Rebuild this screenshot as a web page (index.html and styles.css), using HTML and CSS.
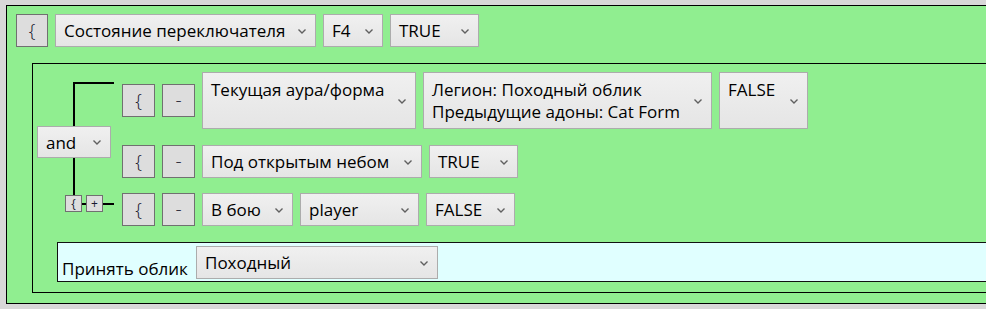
FILE: index.html
```html
<!DOCTYPE html>
<html>
<head>
	<title>Condition editor</title>
	<link rel="stylesheet" href="styles.css">
</head>
<body>
	<div class="outer">
		<div class="head">
			<button class="btn">{</button>
			<div class="combo w-state"><span class="txt">Состояние переключателя</span><svg class="arrow" viewBox="0 0 8 5"><path d="M0.5 0.5 L4 4 L7.5 0.5"/></svg></div>
			<div class="combo w-key"><span class="txt">F4</span><svg class="arrow" viewBox="0 0 8 5"><path d="M0.5 0.5 L4 4 L7.5 0.5"/></svg></div>
			<div class="combo w-bool"><span class="txt">TRUE</span><svg class="arrow" viewBox="0 0 8 5"><path d="M0.5 0.5 L4 4 L7.5 0.5"/></svg></div>
		</div>

		<div class="inner">
			<div class="cond">
				<div class="tree">
					<div class="tree-top"></div>
					<div class="combo w-and"><span class="txt">and</span><svg class="arrow" viewBox="0 0 8 5"><path d="M0.5 0.5 L4 4 L7.5 0.5"/></svg></div>
					<div class="tree-mid"></div>
					<div class="tree-tools">
						<button class="mini">{</button>
						<span class="link link-short"></span>
						<button class="mini">+</button>
						<span class="link link-long"></span>
					</div>
				</div>

				<div class="rows">
					<div class="row row-tall">
						<button class="btn">{</button>
						<button class="btn">-</button>
						<div class="combo w-aura"><span class="txt">Текущая аура/форма</span><svg class="arrow" viewBox="0 0 8 5"><path d="M0.5 0.5 L4 4 L7.5 0.5"/></svg></div>
						<div class="combo w-legion"><span class="txt">Легион: Походный облик<br>Предыдущие адоны: Cat Form</span><svg class="arrow" viewBox="0 0 8 5"><path d="M0.5 0.5 L4 4 L7.5 0.5"/></svg></div>
						<div class="combo w-bool"><span class="txt">FALSE</span><svg class="arrow" viewBox="0 0 8 5"><path d="M0.5 0.5 L4 4 L7.5 0.5"/></svg></div>
					</div>
					<div class="row">
						<button class="btn">{</button>
						<button class="btn">-</button>
						<div class="combo w-sky"><span class="txt">Под открытым небом</span><svg class="arrow" viewBox="0 0 8 5"><path d="M0.5 0.5 L4 4 L7.5 0.5"/></svg></div>
						<div class="combo w-bool"><span class="txt">TRUE</span><svg class="arrow" viewBox="0 0 8 5"><path d="M0.5 0.5 L4 4 L7.5 0.5"/></svg></div>
					</div>
					<div class="row">
						<button class="btn">{</button>
						<button class="btn">-</button>
						<div class="combo w-fight"><span class="txt">В бою</span><svg class="arrow" viewBox="0 0 8 5"><path d="M0.5 0.5 L4 4 L7.5 0.5"/></svg></div>
						<div class="combo w-unit"><span class="txt">player</span><svg class="arrow" viewBox="0 0 8 5"><path d="M0.5 0.5 L4 4 L7.5 0.5"/></svg></div>
						<div class="combo w-bool"><span class="txt">FALSE</span><svg class="arrow" viewBox="0 0 8 5"><path d="M0.5 0.5 L4 4 L7.5 0.5"/></svg></div>
					</div>
				</div>
			</div>

			<div class="action">
				<span class="label">Принять облик</span>
				<div class="combo w-form"><span class="txt">Походный</span><svg class="arrow" viewBox="0 0 8 5"><path d="M0.5 0.5 L4 4 L7.5 0.5"/></svg></div>
			</div>
		</div>
	</div>
</body>
</html>
```

FILE: styles.css
```css
body {
	margin: 0;
	background: #d8d8d8;
	overflow: hidden;
	font-family: "Open Sans", "Noto Sans", sans-serif;
	font-size: 17px;
	color: #000;
}

.outer {
	margin: 5px 0 0 6px;
	border: 1px solid #000;
	border-right: 0;
	background: #90ee90;
	padding: 8px 0 10px 9px;
}

.head {
	display: flex;
	gap: 7px;
}

.btn {
	width: 33px;
	height: 33px;
	flex: none;
	padding: 0;
	border: 1px solid #707070;
	background: #dddddd;
	font-family: inherit;
	font-size: 19px;
	font-weight: 300;
	color: #1a1a30;
	line-height: 1;
}

.head .btn {
	width: 32px;
}

.combo {
	display: flex;
	align-items: flex-start;
	box-sizing: border-box;
	height: 33px;
	flex: none;
	padding: 5px 9px 0 8px;
	border: 1px solid #acacac;
	background: linear-gradient(#f0f0f0, #e5e5e5);
	line-height: 22px;
	white-space: nowrap;
}

.combo .txt {
	flex: 1;
}

.arrow {
	align-self: center;
	width: 8px;
	height: 5px;
	margin-top: -4px;
}

.arrow path {
	fill: none;
	stroke: #606060;
	stroke-width: 1.4;
}

.w-state { width: 261px; }
.w-key { width: 60px; }
.w-bool { width: 89px; }
.w-and { width: 74px; height: 32px; }
.w-aura { width: 214px; }
.w-legion { width: 289px; }
.w-sky { width: 220px; }
.w-fight { width: 91px; }
.w-unit { width: 119px; }
.w-form { width: 242px; }

.inner {
	margin: 16px 0 0 16px;
	border: 1px solid #000;
	border-right: 0;
	padding: 8px 0 10px 0;
}

.cond {
	display: flex;
	padding-left: 4px;
}

.tree {
	width: 78px;
	margin: 10px 7px 0 0;
	display: flex;
	flex-direction: column;
	align-items: flex-start;
}

.tree-top {
	box-sizing: border-box;
	margin-left: 36px;
	width: 41px;
	height: 44px;
	border-top: 2px solid #000;
	border-left: 2px solid #000;
}

.tree-mid {
	margin-left: 36px;
	height: 37px;
	border-left: 2px solid #000;
}

.tree-tools {
	display: flex;
	align-items: center;
	margin-left: 28px;
}

.mini {
	width: 17px;
	height: 17px;
	padding: 0;
	border: 1px solid #707070;
	background: #dddddd;
	font-family: inherit;
	font-size: 12px;
	line-height: 1;
	color: #1a1a30;
}

.link {
	height: 2px;
	background: #000;
}

.link-short { width: 4px; }
.link-long { width: 11px; }

.rows {
	display: flex;
	flex-direction: column;
}

.row {
	display: flex;
	align-items: center;
	gap: 7px;
	height: 33px;
	margin-bottom: 15px;
}

.row:last-child {
	margin-bottom: 0;
}

.row-tall {
	height: 57px;
	margin-bottom: 16px;
}

.row-tall .combo {
	height: 57px;
	padding-top: 6px;
}

.action {
	display: flex;
	margin: 16px 0 0 24px;
	height: 33px;
	padding: 3px 0 2px 4px;
	border: 1px solid #111;
	border-right: 0;
	background: #e0ffff;
}

.label {
	align-self: flex-end;
	width: 134px;
	line-height: 22px;
	margin-bottom: -1px;
}
```
